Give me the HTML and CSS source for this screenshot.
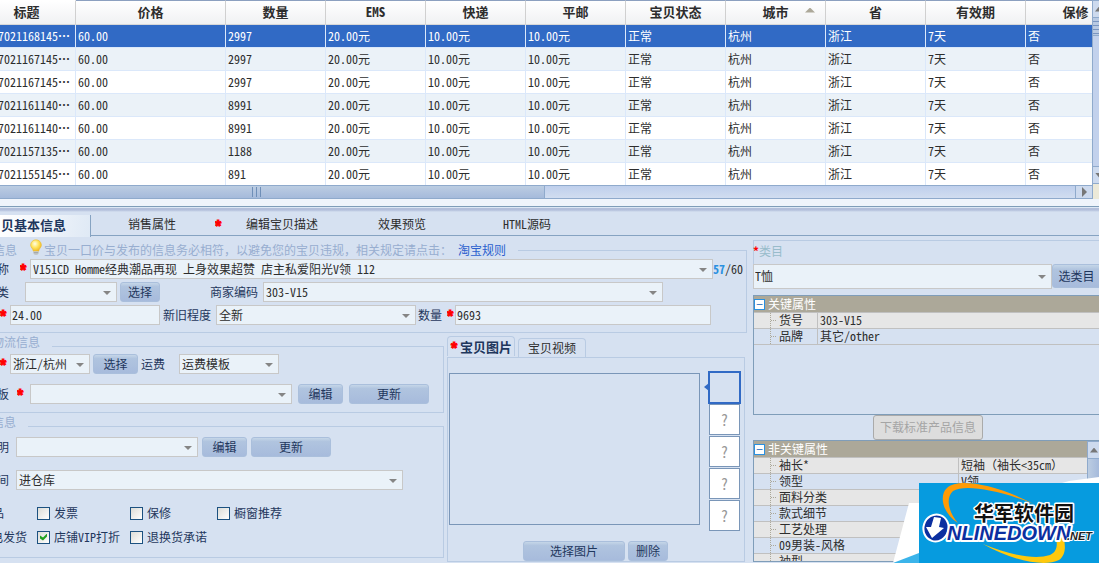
FILE: index.html
```html
<!DOCTYPE html>
<html lang="zh-CN">
<head>
<meta charset="utf-8">
<title>宝贝编辑</title>
<link rel="stylesheet" href="styles.css">
</head>
<body>
<section class="list">
  <div class="list-main">
    <table class="items">
      <colgroup><col class="c-title"><col class="c-price"><col><col><col><col><col><col><col><col><col class="c-last"></colgroup>
      <thead><tr><th>标题</th><th>价格</th><th>数量</th><th>EMS</th><th>快递</th><th>平邮</th><th>宝贝状态</th><th class="sorted">城市</th><th>省</th><th>有效期</th><th>保修</th></tr></thead>
      <tbody>
        <tr class="selected"><td>7021168145<b>⋯</b></td><td>60.00</td><td>2997</td><td>20.00元</td><td>10.00元</td><td>10.00元</td><td>正常</td><td>杭州</td><td>浙江</td><td>7天</td><td>否</td></tr>
        <tr><td>7021167145<b>⋯</b></td><td>60.00</td><td>2997</td><td>20.00元</td><td>10.00元</td><td>10.00元</td><td>正常</td><td>杭州</td><td>浙江</td><td>7天</td><td>否</td></tr>
        <tr><td>7021167145<b>⋯</b></td><td>60.00</td><td>2997</td><td>20.00元</td><td>10.00元</td><td>10.00元</td><td>正常</td><td>杭州</td><td>浙江</td><td>7天</td><td>否</td></tr>
        <tr><td>7021161140<b>⋯</b></td><td>60.00</td><td>8991</td><td>20.00元</td><td>10.00元</td><td>10.00元</td><td>正常</td><td>杭州</td><td>浙江</td><td>7天</td><td>否</td></tr>
        <tr><td>7021161140<b>⋯</b></td><td>60.00</td><td>8991</td><td>20.00元</td><td>10.00元</td><td>10.00元</td><td>正常</td><td>杭州</td><td>浙江</td><td>7天</td><td>否</td></tr>
        <tr><td>7021157135<b>⋯</b></td><td>60.00</td><td>1188</td><td>20.00元</td><td>10.00元</td><td>10.00元</td><td>正常</td><td>杭州</td><td>浙江</td><td>7天</td><td>否</td></tr>
        <tr><td>7021155145<b>⋯</b></td><td>60.00</td><td>891</td><td>20.00元</td><td>10.00元</td><td>10.00元</td><td>正常</td><td>杭州</td><td>浙江</td><td>7天</td><td>否</td></tr>
      </tbody>
    </table>
    <div class="hscroll"><div class="hthumb"><i></i><i></i><i></i></div><div class="htrack"></div><button class="hnext" aria-label="向右滚动"></button></div>
  </div>
  <div class="vscroll"><button class="vbtn up" aria-label="向上滚动"></button><div class="vthumb"></div><div class="vtrack"></div><button class="vbtn down" aria-label="向下滚动"></button><div class="corner"></div></div>
</section>

<nav class="tabs">
  <button class="tab active">贝基本信息</button>
  <button class="tab t-sale">销售属性</button>
  <b class="req">*</b>
  <button class="tab t-desc">编辑宝贝描述</button>
  <button class="tab t-view">效果预览</button>
  <button class="tab t-html">HTML源码</button>
</nav>

<main class="form">
  <div class="left">
    <section class="group basic">
      <div class="legend"><h2 class="cut w17">信息</h2>
        <svg class="bulb" viewBox="0 0 14 17" width="14" height="17"><defs><radialGradient id="g" cx=".4" cy=".35" r=".7"><stop offset="0" stop-color="#fffde8"/><stop offset=".5" stop-color="#ffe45c"/><stop offset="1" stop-color="#eeb21e"/></radialGradient></defs><path d="M7 .8a5.3 5.3 0 0 0-5.400 5.200c0 2.500 2.400 3.500 2.700 6.200h5.400c.3-2.700 2.700-3.700 2.700-6.200A5.300 5.300 0 0 0 7 .8z" fill="url(#g)" stroke="#e9b838" stroke-width=".6"/><path d="M4.600 12.300h4.800v2.700l-1.400 1h-2l-1.400-1z" fill="#c3c7c9"/><path d="M4.600 13.700h4.800" stroke="#8c9298" stroke-width=".7"/></svg>
        <span class="hint">宝贝一口价与发布的信息务必相符，以避免您的宝贝违规，相关规定请点击：</span><a href="#rules">淘宝规则</a></div>
      <div class="row">
        <label class="cut w9" for="name">称</label><b class="req r-name">*</b>
        <span class="sel grow"><select id="name"><option>V151CD Homme经典潮品再现 上身效果超赞 店主私爱阳光V领 112</option></select></span>
        <span class="count"><b>57</b>/60</span>
      </div>
      <div class="row">
        <label class="cut w9" for="kind">类</label>
        <span class="sel s-kind"><select id="kind"><option></option></select></span>
        <button class="btn b-pick">选择</button>
        <label class="l-code" for="code">商家编码</label>
        <span class="sel grow s-code"><select id="code"><option>303-V15</option></select></span>
      </div>
      <div class="row">
        <b class="req">*</b><input class="text i-price" aria-label="价格" value="24.00">
        <label class="l-age" for="age">新旧程度</label>
        <span class="sel s-age"><select id="age"><option>全新</option></select></span>
        <label class="l-qty" for="qty">数量</label><b class="req r-qty">*</b>
        <input class="text grow i-qty" id="qty" value="9693">
      </div>
    </section>

    <div class="lower">
      <div class="stack">
        <section class="group ship">
          <div class="legend"><h2 class="cut w40">物流信息</h2></div>
          <div class="row">
            <b class="req">*</b><span class="sel s-place"><select aria-label="所在地"><option>浙江/杭州</option></select></span>
            <button class="btn b-mid">选择</button>
            <label class="l-fee" for="fee">运费</label>
            <span class="sel s-fee"><select id="fee"><option>运费模板</option></select></span>
          </div>
          <div class="row r2">
            <label class="cut w9" for="tpl">板</label><b class="req r-tpl">*</b>
            <span class="sel grow"><select id="tpl"><option></option></select></span>
            <button class="btn b-edit">编辑</button><button class="btn b-renew">更新</button>
          </div>
        </section>
        <section class="group other">
          <div class="legend"><h2 class="cut w16">信息</h2></div>
          <div class="row">
            <label class="cut w9" for="note">明</label>
            <span class="sel s-note"><select id="note"><option></option></select></span>
            <button class="btn b-edit2">编辑</button><button class="btn b-renew2">更新</button>
          </div>
          <div class="row r3">
            <label class="cut w9" for="time">间</label>
            <span class="sel grow s-time"><select id="time"><option>进仓库</option></select></span>
          </div>
          <div class="checks">
            <span class="cut w27">品</span>
            <label><input type="checkbox">发票</label><label><input type="checkbox">保修</label><label><input type="checkbox">橱窗推荐</label>
          </div>
          <div class="checks">
            <span class="cut w27 full">电发货</span>
            <label><input type="checkbox" checked>店铺VIP打折</label><label><input type="checkbox">退换货承诺</label>
          </div>
        </section>
      </div>

      <section class="media">
        <div class="mtabs"><button class="mtab on"><b class="req">*</b>宝贝图片</button><button class="mtab">宝贝视频</button></div>
        <div class="mbody">
          <div class="pics">
            <div class="preview"></div>
            <div class="thumbs"><button class="thumb on" aria-label="图片一"></button><button class="thumb">?</button><button class="thumb">?</button><button class="thumb">?</button><button class="thumb">?</button></div>
          </div>
          <div class="mact"><button class="btn b-image">选择图片</button><button class="btn b-del">删除</button></div>
        </div>
      </section>
    </div>
  </div>

  <aside class="right">
    <div class="cat"><label for="cat"><b>*</b>类目</label></div>
    <div class="catrow"><span class="sel grow"><select id="cat"><option>T恤</option></select></span><button class="btn">选类目</button></div>
    <div class="tree key">
      <div class="thead"><button aria-label="折叠">−</button>关键属性</div>
      <dl><div><dt>货号</dt><dd>303-V15</dd></div><div><dt>品牌</dt><dd>其它/other</dd></div></dl>
    </div>
    <button class="download" disabled>下载标准产品信息</button>
    <div class="tree more">
      <div class="tmain">
        <div class="thead"><button aria-label="折叠">−</button>非关键属性</div>
        <dl><div><dt>袖长*</dt><dd>短袖（袖长&lt;35cm）</dd></div><div><dt>领型</dt><dd>V领</dd></div><div><dt>面料分类</dt><dd></dd></div><div><dt>款式细节</dt><dd></dd></div><div><dt>工艺处理</dt><dd></dd></div><div><dt>09男装-风格</dt><dd></dd></div><div><dt>袖型</dt><dd></dd></div></dl>
      </div>
      <div class="vscroll"><button class="vbtn up" aria-label="向上滚动"></button><div class="vthumb"></div><div class="vtrack"></div></div>
    </div>
  </aside>
</main>

<svg class="brand" viewBox="0 0 206 86" width="206" height="86" role="img" aria-label="华军软件园">
  <path d="M16 26h10v60H0z M169 6l7-2 30-4v6z" fill="#fff"/>
  <path d="M0 86l26-10v10z" fill="#3bb4ea"/>
  <path d="M26 6h180v80H26z" fill="#069bdf"/>
  <path d="M65 46C49 36 46 18 54 11C64 1 100 6 141 27C105 13 72 7 60 14C52 21 56 36 65 46Z" fill="#ff9b05"/>
  <path d="M90 67C116 82 150 91 166 83C174 77 173 66 168 52h-8C165 64 166 74 157 78C142 83 116 78 90 67Z" fill="#ffc90c"/>
  <text class="brand-cn" x="81" y="44">华军软件园</text>
  <ellipse cx="43" cy="51" rx="11" ry="12" transform="rotate(18 43 51)" fill="#fff" stroke="#fff" stroke-width="5"/>
  <ellipse cx="43" cy="51" rx="10" ry="11" transform="rotate(18 43 51)" fill="#0b2fa0" stroke="#0b2fa0" stroke-width="3"/>
  <path d="M41 40l7 1-2 9 5 1-12 10-6-11h5z" fill="#fff"/>
  <text class="brand-en" x="54" y="63">NLINEDOWN</text>
  <text class="brand-net" x="174" y="63">.NET</text>
</svg>
</body>
</html>
```
FILE: styles.css
```css
* { box-sizing: border-box; }
body {
  margin: 0;
  height: 100vh;
  display: flex;
  flex-direction: column;
  overflow: hidden;
  background: #d6e1f1;
  color: #2d2d2d;
  font: 12px/16px "Noto Sans Mono CJK SC", "Liberation Sans", "Noto Sans CJK SC", sans-serif;
}
button, input, select { font: inherit; color: inherit; margin: 0; border-radius: 0; }
button { padding: 0; border: 0; background: none; white-space: nowrap; }
h2 { margin: 0; font: inherit; }
label { white-space: nowrap; }
.grow { flex: 1; min-width: 0; }

/* item list */
.list { display: flex; flex: none; border-bottom: 7px solid #eff4fb; overflow: hidden; }
.list-main { flex: 1; min-width: 0; overflow: hidden; }
.items { width: calc(100% + 37px); margin-left: -3px; table-layout: fixed; border-collapse: separate; border-spacing: 0; background: #fff; }
.c-title { width: 79px; }
.c-price { width: 150px; }
.c-last { width: 100px; }
.items th {
  height: 25px;
  padding: 0 0 2px;
  border-right: 1px solid #d0d0d0;
  border-top: 1px solid #8ca0c0;
  border-bottom: 1px solid #d8d8d8;
  background: linear-gradient(#fff, #f0f1f3);
  font-size: 13px;
  line-height: 20px;
}
.items th:first-child { border-top-color: #fff; padding-right: 19px; }
.items .sorted::after {
  content: "";
  float: right;
  width: 10px;
  height: 5px;
  margin: 6px 10px 0 -20px;
  background: #aca899;
  clip-path: polygon(50% 0, 100% 100%, 0 100%);
}
.items td {
  height: 23px;
  padding: 0 0 1px 2px;
  border-right: 1px solid #dbe8fa;
  border-bottom: 1px solid #dbe8fa;
  line-height: 20px;
  white-space: nowrap;
  overflow: hidden;
}
.items td:first-child { padding-left: 1px; }
.items tbody tr:nth-child(even) { background: #ebf2f8; }
.items tbody .selected { background: #316ac5; color: #fff; }
.items tbody tr:last-child td { border-bottom-color: #fff; }
.hscroll { display: flex; height: 14px; margin-top: -1px; position: relative; border-top: 1px solid #8faacc; border-bottom: 1px solid #8faacc; }
.hthumb { flex: 544; min-width: 0; display: flex; gap: 3px; padding-top: 1px; justify-content: center; border-right: 1px solid #8faacc; background: linear-gradient(#bccde2, #a5badb); }
.hthumb i { width: 1px; height: 10px; background: #6f8fb8; }
.hthumb i:first-child { margin-left: -30px; }
.htrack { flex: 531; background: linear-gradient(#bfcfec, #d1ddf0); }
.hnext, .vbtn { background: #cddaee; }
.hnext { width: 17px; border-left: 1px solid #8faacc; }
.hnext::after { content: ""; display: block; width: 5px; height: 10px; margin-left: 6px; background: #777; clip-path: polygon(0 0, 100% 50%, 0 100%); }
.vscroll { width: 7px; flex: none; display: flex; flex-direction: column; border-left: 1px solid #8faacc; overflow: hidden; }
.vbtn { height: 18px; border: solid #8faacc; border-width: 1px 0; }
.vbtn::after { content: ""; display: block; width: 8px; height: 5px; margin-left: 2px; background: #777; clip-path: polygon(50% 0, 100% 100%, 0 100%); }
.vbtn.down::after { clip-path: polygon(0 0, 100% 0, 50% 100%); }
.vthumb { height: 18px; border-bottom: 1px solid #8faacc; background: repeating-linear-gradient(#b9cae3 0 3px, #7995c0 3px 4px); }
.more .vthumb { height: 36px; background: linear-gradient(90deg, #bccde2, #a5badb); }
.vtrack { flex: 1; background: #c2d1ec; }
.corner { height: 15px; background: #ece9d8; }

/* main tabs */
.tabs {
  flex: none;
  display: flex;
  align-items: center;
  height: 30px;
  padding-top: 8px;
  border-top: 1px solid #7f9db9;
  border-bottom: 1px solid #86a3c2;
  background: linear-gradient(#dce7f4 0 1px, #b3bfdb 1px 3px, #d6e1f1 5px);
}
.tab { height: 21px; text-align: left; padding-bottom: 2px; }
.tab.active { width: 91px; height: 22px; padding-left: 1px; margin-bottom: -1px; border-right: 1px solid #86a3c2; background: linear-gradient(100deg, #fff, #dfe9f5); color: #1f375d; font-size: 13px; font-weight: 700; }
.t-sale { width: 87px; margin-left: 37px; }
.t-desc { width: 132px; margin-left: 21px; }
.t-view { width: 125px; }

.req { flex: none; width: 10px; height: 20px; padding-top: 3px; overflow: hidden; color: #f00; font: 700 16px/18px "Liberation Sans", sans-serif; -webkit-text-stroke: 1px #f00; }

/* editor */
.form { flex: 1; min-height: 0; display: grid; grid-template-columns: minmax(0, 747fr) minmax(0, 346fr); gap: 6px; }
.left { min-width: 0; color: #1f375d; }
.group { position: relative; }
.group::before { content: ""; position: absolute; inset: 13px 0 0 0; border: solid #b9cbe3; border-width: 1px 1px 1px 0; pointer-events: none; }
.legend { position: relative; display: inline-flex; align-items: center; height: 18px; padding-right: 12px; background: #d6e1f1; color: #98aed0; white-space: nowrap; }
.legend a { margin-left: 6px; color: #2b5fce; text-decoration: none; }
.bulb { margin: -5px 1px 0 12px; flex: none; }
.basic { padding: 4px 0 8px; }
.basic::before { top: 14px; }
.basic .legend { height: 19px; vertical-align: top; }
.row { position: relative; display: flex; align-items: center; height: 20px; }
.basic .row + .row { margin-top: 3px; }
.cut { display: flex; flex: none; justify-content: flex-end; overflow: hidden; white-space: nowrap; }
.w9 { width: 9px; }
.w16 { width: 16px; }
.w17 { width: 17px; }
.w27 { width: 27px; }
.w40 { width: 40px; }
.r-name { margin: 0 0 0 11px; }
.r-tpl { margin: 0 3px 0 8px; }
.r-qty { margin-left: 5px; width: 8px; }

.sel { position: relative; display: flex; flex-shrink: 0; height: 20px; }
.sel.grow { flex-shrink: 1; }
.sel select, .text {
  width: 100%;
  height: 20px;
  padding: 0 20px 1px 2px;
  border: 1px solid #c8c8c8;
  background: #eaf2f9;
  color: #2d2d2d;
  appearance: none;
  outline: 0;
}
.sel::after { content: ""; position: absolute; right: 6px; top: 9px; width: 8px; height: 4px; background: #858585; clip-path: polygon(0 0, 100% 0, 50% 100%); }
.text { padding: 0 2px 2px 1px; flex-shrink: 0; }
.btn {
  flex: none;
  height: 20px;
  padding-bottom: 1px;
  border: 1px solid #aabfdc;
  border-radius: 3px;
  background: linear-gradient(#c5d6e8, #b0c4df 20%, #a7bbdc);
  color: #1f375d;
}
.count { width: 34px; color: #2d2d2d; }
.count b { color: #2a90e0; }
.s-kind { width: 92px; margin-left: 16px; }
.b-pick { width: 40px; margin-left: 3px; }
.l-code { width: 53px; margin-left: 50px; }
.s-code { margin-right: 84px; }
.i-price { width: 150px; }
.l-age { width: 53px; margin-left: 3px; }
.s-age { width: 200px; }
.l-qty { margin-left: 2px; }
.i-qty { margin-right: 36px; }

.lower { display: grid; grid-template-columns: minmax(0, 444fr) minmax(0, 298fr); column-gap: 3px; margin-right: 2px; }
.lower .legend { vertical-align: top; }
.ship { padding-bottom: 9px; }
.ship .row { margin-top: 3px; }
.ship .r2 { margin-top: 10px; }
.s-place { width: 80px; }
.b-mid { width: 45px; margin-left: 3px; }
.l-fee { width: 38px; margin-left: 3px; }
.s-fee { width: 100px; }
.b-edit { width: 45px; margin: 0 6px; }
.b-renew { width: 80px; margin-right: 15px; }
.other { padding-bottom: 9px; }
.other .row { margin-top: 6px; }
.other .r3 { margin: 13px 0 11px; }
.s-note { width: 182px; margin-left: 7px; }
.b-edit2 { width: 45px; margin-left: 4px; }
.b-renew2 { width: 80px; margin-left: 4px; }
.s-time { margin: 0 41px 0 7px; }
.checks { position: relative; display: grid; grid-template-columns: 37px 93px 87px 1fr; align-items: center; height: 24px; }
.checks .cut { padding-right: 23px; }
.checks .cut.full { padding-right: 0; }
.checks label { display: flex; align-items: center; gap: 4px; }
.checks input {
  appearance: none;
  width: 13px;
  height: 13px;
  border: 1px solid #1c5180;
  background: linear-gradient(135deg, #dcdcd7, #fff);
}
.checks input:checked::after { content: ""; display: block; width: 7px; height: 7px; margin: 2px; background: #21a121; clip-path: polygon(0 28%, 43% 58%, 100% 0, 100% 42%, 43% 100%, 0 70%); }

/* picture panel */
.media { padding-top: 3px; color: #2d2d2d; }
.mtabs { display: flex; align-items: flex-end; gap: 3px; height: 21px; }
.mtab { width: 68px; height: 19px; border: 1px solid #b9cbe3; border-bottom: 0; border-radius: 4px 4px 0 0; }
.mtab.on { display: flex; align-items: center; height: 20px; align-self: flex-start; color: #1f375d; font-size: 13px; font-weight: 700; }
.mtab .req { width: 12px; }
.mbody { border: 1px solid #b9cbe3; padding: 13px 3px 0 1px; }
.pics { display: flex; justify-content: space-between; }
.preview { flex: 1; height: 152px; margin: 2px 8px 0 0; border: 1px solid #7a96b8; }
.thumbs { display: flex; flex-direction: column; width: 33px; align-items: center; }
.thumb { width: 31px; height: 31px; margin-bottom: 1px; border: 1px solid #7a96b8; background: #fff; color: #999; font-size: 15px; }
.thumb.on { position: relative; width: 33px; height: 33px; margin-bottom: 0; border: 2px solid #316ac5; background: #d6e1f1; }
.thumb.on::before { content: ""; position: absolute; left: -6px; top: 10px; width: 5px; height: 8px; background: #316ac5; clip-path: polygon(100% 0, 100% 100%, 0 50%); }
.mact { display: flex; justify-content: center; gap: 3px; margin: 9px 0 0 1px; }
.b-image { width: 102px; }
.b-del { width: 40px; }

/* category panel */
.right { min-width: 0; min-height: 0; display: flex; flex-direction: column; }
.cat { flex: none; height: 24px; margin-top: 4px; padding-top: 2px; border: solid #b9cbe3; border-width: 1px 0 0 1px; color: #98bccb; }
.cat label { margin-left: -1px; }
.cat b { color: #f00; }
.catrow { flex: none; display: flex; }
.catrow .sel, .catrow select { height: 25px; }
.catrow select { padding: 0 20px 2px 1px; }
.catrow .sel::after { top: 11px; }
.catrow .btn { width: 52px; height: 24px; margin: 0 -5px 0 0; padding: 0 3px 1px 0; }
.tree { border: solid #7f9db9; border-width: 1px 0 1px 1px; }
.key { flex: none; height: 120px; margin-top: 6px; }
.more { flex: 1; display: flex; min-height: 0; overflow: hidden; margin-bottom: 1px; }
.tmain { flex: 1; min-width: 0; }
.more .vscroll { width: 12px; }
.thead { display: flex; align-items: center; gap: 3px; height: 16px; background: #aca899; color: #fff; }
.thead button { width: 11px; height: 11px; border: 1px solid #2a90e0; background: #fff; color: #2a70c0; line-height: 8px; }
.tree dl { margin: 0; }
.tree dl div { display: flex; height: 16px; border-top: 1px solid #c0c0c0; line-height: 14px; }
.tree dl div:nth-child(odd) { background: #e6e6e6; }
.tree dl div:last-child { box-shadow: 0 1px #c0c0c0; }
.tree dt { width: 64px; padding-left: 25px; border-right: 1px solid #c0c0c0; background: linear-gradient(#aca899 50%, transparent 50%) 16px 0 / 1px 2px repeat-y; white-space: nowrap; }
.tree dt::before { content: ""; float: left; width: 5px; margin: 7px 0 0 -8px; border-top: 1px dotted #aca899; }
.tree dd { margin: 0; padding-left: 2px; white-space: nowrap; }
.more dt { width: 205px; flex: none; }
.more dd { overflow: hidden; }
.download { flex: none; width: 110px; height: 25px; margin: 0 0 0 120px; padding-bottom: 2px; border: 1px solid #aaa; border-radius: 3px; background: #ddd; color: #a5a5a5; }

/* brand badge */
.brand { position: absolute; right: 0; bottom: 0; }
.brand-cn, .brand-en, .brand-net { paint-order: stroke; stroke: #fff; stroke-linejoin: round; }
.brand-cn { font: 700 20px "Noto Sans CJK SC", sans-serif; stroke-width: 3px; fill: #111; }
.brand-en { font: italic 700 20px "Liberation Sans", sans-serif; stroke-width: 4px; fill: #0b2fa0; }
.brand-net { font: italic 700 11px "Liberation Sans", sans-serif; stroke-width: 2px; fill: #222; }
```
